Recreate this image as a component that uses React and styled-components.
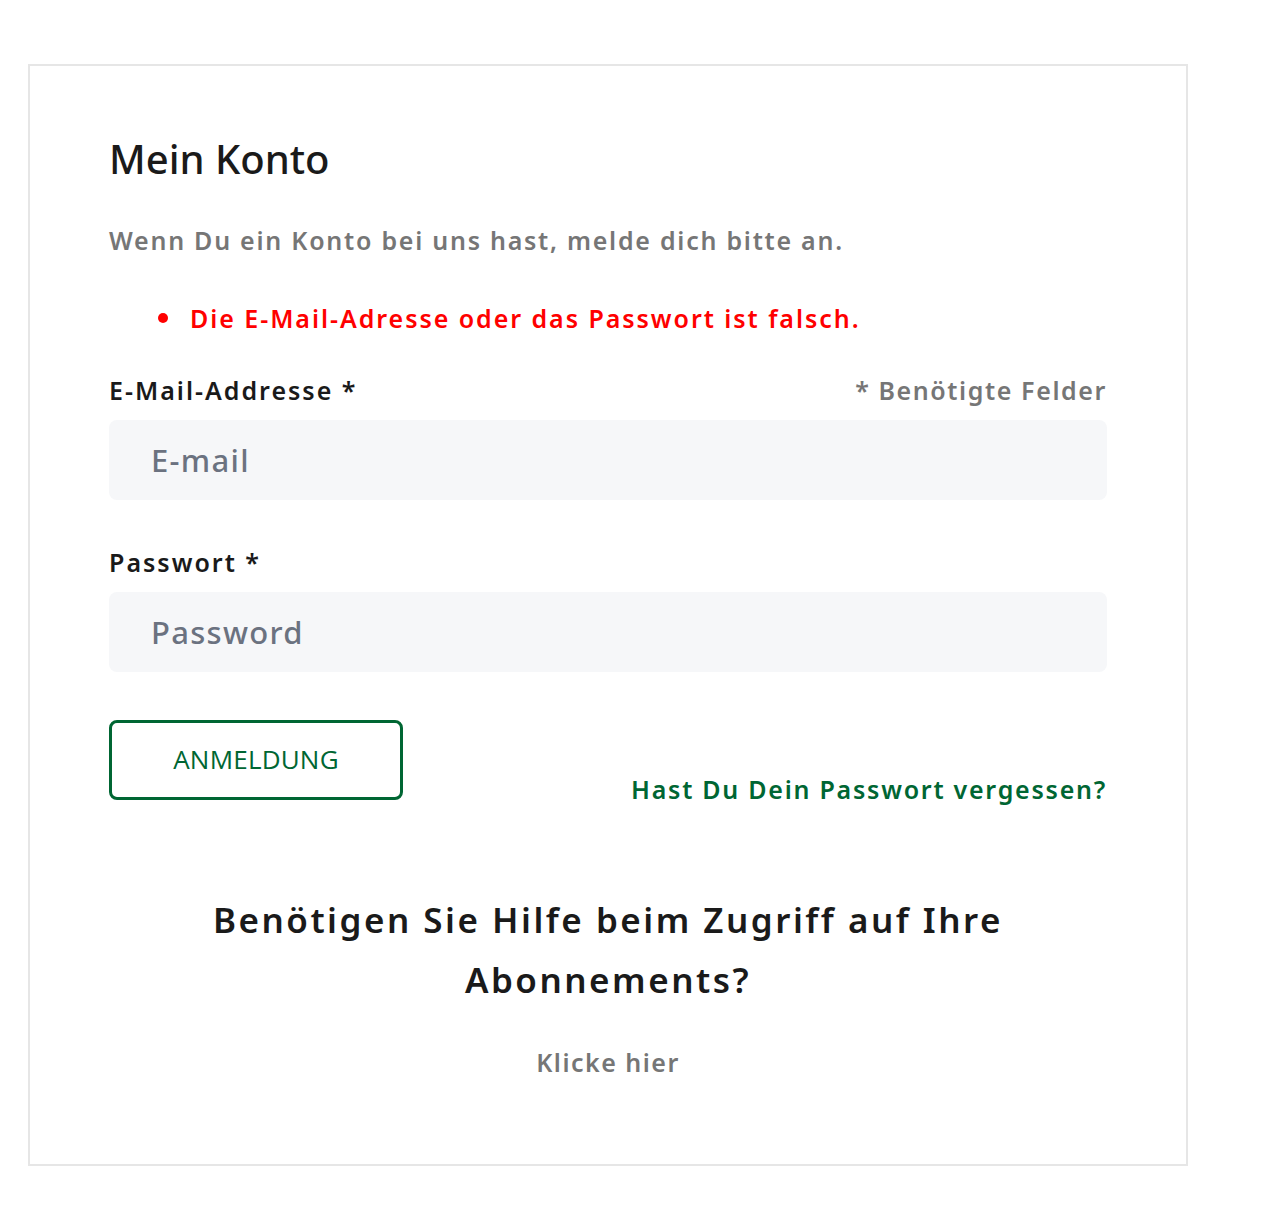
import styled, { createGlobalStyle } from 'styled-components'

const GlobalStyle = createGlobalStyle`
body {
  margin: 0;
  background: #fff;
  font-family: "Noto Sans", "Open Sans", sans-serif;
}
`;

const Page = styled.div`
padding: 64px 0 48px 28px;
`;

const Card = styled.div`
width: 1160px;
height: 1102px;
box-sizing: border-box;
border: 2px solid #e6e6e6;
padding: 65px 79px 0 79px;
display: flex;
flex-direction: column;
`;

const Title = styled.h1`
margin: 0;
font-size: 40px;
font-weight: 500;
color: #1a1a1a;
line-height: 56px;
`;

const Intro = styled.p`
margin: 37px 0 0;
font-size: 25px;
font-weight: 600;
letter-spacing: 1.75px;
color: #767676;
line-height: 32px;
`;

const Errors = styled.ul`
margin: 46px 0 0;
padding-left: 49px;
list-style: none;
color: #ff0000;
font-size: 25px;
font-weight: 600;
letter-spacing: 1.95px;
line-height: 32px;
`;

const ErrorItem = styled.li`
display: flex;
align-items: center;
gap: 22px;
&::before {
  content: "";
  width: 10px;
  height: 10px;
  border-radius: 50%;
  background: #ff0000;
  flex-shrink: 0;
}
`;

const FieldHead = styled.div`
display: flex;
justify-content: space-between;
align-items: baseline;
margin-top: ${(p) => p.$top}px;
`;

const Label = styled.label`
font-size: 25px;
font-weight: 600;
letter-spacing: 2px;
color: #1a1a1a;
line-height: 32px;
`;

const Hint = styled.span`
font-size: 25px;
font-weight: 600;
letter-spacing: 1.6px;
color: #767676;
line-height: 32px;
`;

const Input = styled.input`
display: block;
width: 100%;
box-sizing: border-box;
height: 80px;
margin-top: 14px;
border: none;
border-radius: 8px;
background: #f6f7f9;
padding: 0 42px;
font-family: inherit;
font-size: 31px;
font-weight: 500;
letter-spacing: 1.3px;
color: #1a1a1a;
outline: none;
&::placeholder {
  color: #6b7280;
}
`;

const Actions = styled.div`
display: flex;
justify-content: space-between;
align-items: flex-end;
margin-top: 48px;
`;

const Button = styled.button`
width: 294px;
height: 80px;
box-sizing: border-box;
border: 3px solid #006633;
border-radius: 8px;
background: #fff;
color: #006633;
font-family: "Open Sans", sans-serif;
font-size: 26px;
letter-spacing: 0.2px;
padding-bottom: 3px;
`;

const Forgot = styled.a`
font-size: 25px;
font-weight: 600;
letter-spacing: 1.75px;
color: #006633;
text-decoration: none;
line-height: 32px;
margin-bottom: -5px;
`;

const Help = styled.div`
display: flex;
flex-direction: column;
align-items: center;
text-align: center;
margin-top: 90px;
`;

const HelpTitle = styled.h2`
margin: 0;
font-size: 35px;
font-weight: 600;
letter-spacing: 2.5px;
color: #1a1a1a;
line-height: 60px;
`;

const HelpLink = styled.a`
margin-top: 36px;
font-size: 25px;
font-weight: 600;
letter-spacing: 1.5px;
color: #767676;
text-decoration: none;
line-height: 32px;
`;

function App() {
  return (
    <Page>
      <GlobalStyle />
      <Card>
        <Title>Mein Konto</Title>
        <Intro>Wenn Du ein Konto bei uns hast, melde dich bitte an.</Intro>

        <Errors>
          <ErrorItem>Die E-Mail-Adresse oder das Passwort ist falsch.</ErrorItem>
        </Errors>

        <FieldHead $top={40}>
          <Label htmlFor="email">E-Mail-Addresse *</Label>
          <Hint>* Benötigte Felder</Hint>
        </FieldHead>
        <Input id="email" type="email" placeholder="E-mail" />

        <FieldHead $top={46}>
          <Label htmlFor="password">Passwort *</Label>
        </FieldHead>
        <Input id="password" type="password" placeholder="Password" />

        <Actions>
          <Button>ANMELDUNG</Button>
          <Forgot href="#">Hast Du Dein Passwort vergessen?</Forgot>
        </Actions>

        <Help>
          <HelpTitle>
            Benötigen Sie Hilfe beim Zugriff auf Ihre
            <br />
            Abonnements?
          </HelpTitle>
          <HelpLink href="#">Klicke hier</HelpLink>
        </Help>
      </Card>
    </Page>
  )
}

export default App
